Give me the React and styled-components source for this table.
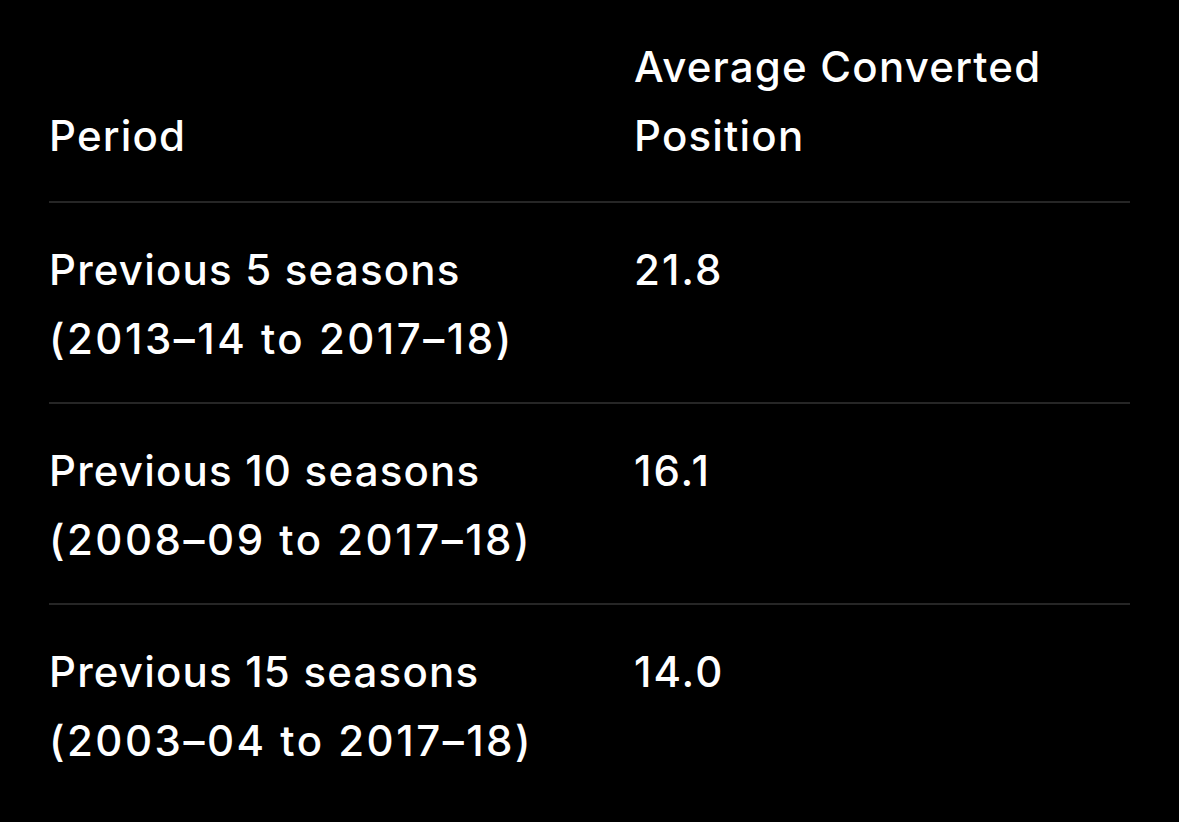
import styled, { createGlobalStyle } from "styled-components";

const GlobalStyle = createGlobalStyle`
  html, body {
    margin: 0;
    padding: 0;
    background: #000;
  }
  body {
    font-family: "Inter", "Noto Sans", sans-serif;
    color: #fff;
  }
`;

const Page = styled.div`
  width: 1179px;
  height: 822px;
  box-sizing: border-box;
  padding: 32px 49px 0;
  background: #000;
`;

const Table = styled.table`
  width: 100%;
  border-collapse: collapse;
  letter-spacing: 1.2px;
`;

const HeadCell = styled.th`
  text-align: left;
  vertical-align: bottom;
  font-weight: 500;
  font-size: 42px;
  line-height: 69px;
  padding: 0 0 31px;
  width: ${(p) => p.width || "auto"};
  border-bottom: 2px solid #262626;
`;

const Row = styled.tr`
  border-bottom: ${(p) => (p.last ? "none" : "2px solid #262626")};
`;

const Cell = styled.td`
  vertical-align: top;
  font-weight: 500;
  font-size: 42px;
  line-height: 69px;
  padding: 32px 0 29px;
  letter-spacing: ${(p) => (p.numeric ? "2px" : "inherit")};
`;

const Line = styled.span`
  display: block;
`;

const Range = styled.span`
  display: block;
  letter-spacing: 2.5px;
`;

const rows = [
  { period: "Previous 5 seasons", range: "(2013–14 to 2017–18)", value: "21.8" },
  { period: "Previous 10 seasons", range: "(2008–09 to 2017–18)", value: "16.1" },
  { period: "Previous 15 seasons", range: "(2003–04 to 2017–18)", value: "14.0" },
];

const App = () => {
  return (
    <Page>
      <GlobalStyle />
      <Table>
        <thead>
          <tr>
            <HeadCell width="585px">Period</HeadCell>
            <HeadCell>
              Average Converted
              <br />
              Position
            </HeadCell>
          </tr>
        </thead>
        <tbody>
          {rows.map((r, i) => (
            <Row key={r.period} last={i === rows.length - 1}>
              <Cell>
                <Line>{r.period}</Line>
                <Range>{r.range}</Range>
              </Cell>
              <Cell numeric>{r.value}</Cell>
            </Row>
          ))}
        </tbody>
      </Table>
    </Page>
  );
};

export default App;
